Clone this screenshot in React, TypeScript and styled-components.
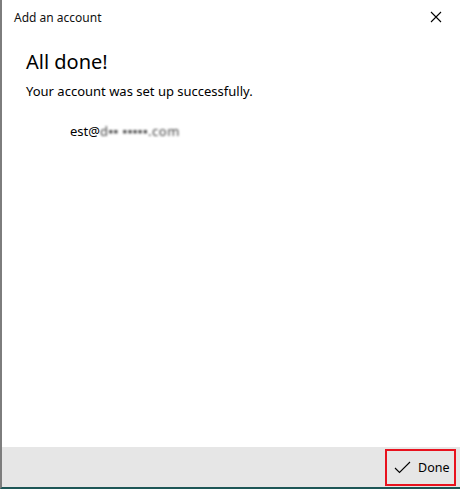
import { FC } from "react";
import styled, { createGlobalStyle } from "styled-components";

const GlobalStyle = createGlobalStyle`
  html, body {
    margin: 0;
    padding: 0;
    background: #ffffff;
    overflow: hidden;
  }
  body {
    font-family: "Noto Sans", "Open Sans", "Liberation Sans", sans-serif;
    color: #000;
  }
`;

const Dialog = styled.div`
  width: 460px;
  height: 489px;
  display: flex;
  flex-direction: column;
  box-sizing: border-box;
  border-left: 2px solid #7d7d7d;
  border-bottom: 2px solid #1d5656;
  background: #fff;
`;

const TitleBar = styled.div`
  height: 34px;
  display: flex;
  align-items: center;
  justify-content: space-between;
  padding: 0 18px 0 12px;
`;

const Title = styled.div`
  font-size: 12px;
  color: #111;
`;

const CloseButton = styled.button`
  border: none;
  background: none;
  padding: 0;
  width: 12px;
  height: 12px;
  display: flex;
  cursor: pointer;
`;

const Body = styled.div`
  flex: 1;
  padding: 14px 24px 0;
`;

const Heading = styled.h1`
  margin: 0;
  font-size: 20px;
  font-weight: 400;
  line-height: 28px;
  color: #000;
`;

const Message = styled.p`
  margin: 6px 0 0;
  font-size: 13px;
  line-height: 18px;
  color: #000;
`;

const AccountRow = styled.div`
  margin: 22px 0 0 44px;
  font-size: 13px;
  line-height: 18px;
  display: flex;
  align-items: center;
`;

const Obscured = styled.span`
  color: #444;
  filter: blur(1.2px);
  letter-spacing: 0.5px;
`;

const Footer = styled.div`
  height: 40px;
  background: #e6e6e6;
  display: flex;
  justify-content: flex-end;
  align-items: center;
  padding-right: 4px;
`;

const DoneButton = styled.button`
  height: 37px;
  width: 71px;
  box-sizing: border-box;
  border: 2px solid #e8121e;
  background: transparent;
  display: flex;
  align-items: center;
  gap: 7px;
  padding: 0 0 0 7px;
  font-family: inherit;
  font-size: 12.5px;
  font-weight: 400;
  color: #000;
  cursor: pointer;
`;

const App: FC = () => {
  return (
    <>
      <GlobalStyle />
      <Dialog>
        <TitleBar>
          <Title>Add an account</Title>
          <CloseButton aria-label="Close">
            <svg width="12" height="12" viewBox="0 0 12 12">
              <path d="M1 1 L11 11 M11 1 L1 11" stroke="#000" strokeWidth="1.1" />
            </svg>
          </CloseButton>
        </TitleBar>
        <Body>
          <Heading>All done!</Heading>
          <Message>Your account was set up successfully.</Message>
          <AccountRow>
            est@<Obscured>d▪▪ ▪▪▪▪▪.com</Obscured>
          </AccountRow>
        </Body>
        <Footer>
          <DoneButton>
            <svg width="17" height="13" viewBox="0 0 17 13">
              <path d="M1 7 L5.5 11.5 L16 1" fill="none" stroke="#000" strokeWidth="1.1" />
            </svg>
            Done
          </DoneButton>
        </Footer>
      </Dialog>
    </>
  );
};

export default App;
